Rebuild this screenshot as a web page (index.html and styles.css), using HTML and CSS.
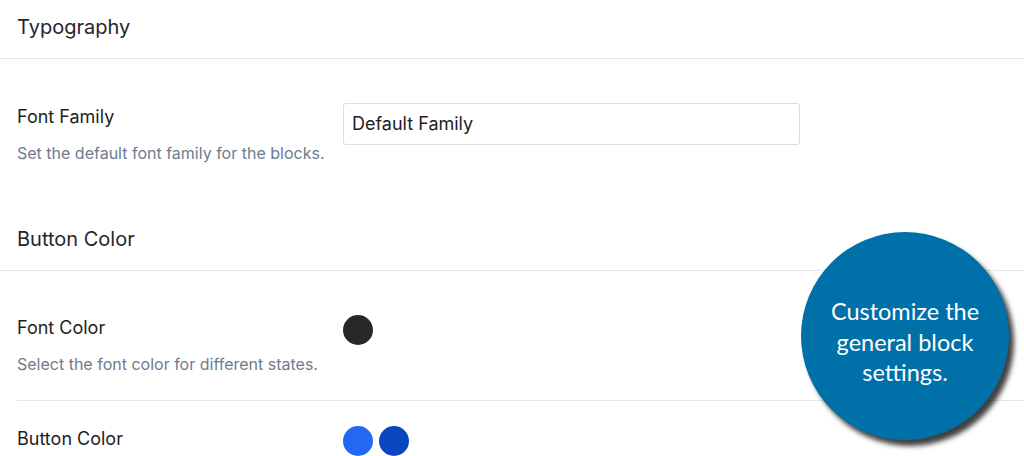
FILE: index.html
```html
<!DOCTYPE html>
<html>
<head>
<meta charset="utf-8">
<link rel="stylesheet" href="styles.css">
</head>
<body>
<div class="page">
  <div class="section-head">Typography</div>
  <div class="row row-first">
    <div class="info">
      <div class="label">Font Family</div>
      <div class="desc">Set the default font family for the blocks.</div>
    </div>
    <div class="control">
      <div class="input">Default Family</div>
    </div>
  </div>
  <div class="section-head">Button Color</div>
  <div class="row row-second">
    <div class="info">
      <div class="label">Font Color</div>
      <div class="desc">Select the font color for different states.</div>
    </div>
    <div class="control swatches">
      <span class="swatch dark"></span>
    </div>
  </div>
  <div class="row row-third">
    <div class="info">
      <div class="label">Button Color</div>
    </div>
    <div class="control swatches">
      <span class="swatch blue"></span>
      <span class="swatch navy"></span>
    </div>
  </div>
  <div class="callout"><span>Customize the general block settings.</span></div>
</div>
</body>
</html>
```
FILE: styles.css
```css
html, body {
  margin: 0;
  padding: 0;
  background: #ffffff;
}
body {
  font-family: Inter, "Liberation Sans", sans-serif;
  color: #1e1e1e;
  width: 1024px;
  height: 456px;
  overflow: hidden;
}
.page {
  position: relative;
  height: 456px;
}
.section-head {
  padding: 13px 17px 17px;
  font-size: 20px;
  line-height: 28px;
  color: #23272c;
  border-bottom: 1px solid #e4e9f3;
}
.row {
  display: flex;
  align-items: flex-start;
  margin-left: 17px;
}
.row-first {
  padding: 46px 0 49px;
}
.row-second {
  padding: 45px 0 26px;
  border-bottom: 1px solid #e6e7ee;
}
.row-third {
  padding: 26px 0 6px;
}
.info {
  width: 326px;
  flex: none;
}
.label {
  font-size: 18px;
  line-height: 24px;
  color: #1e1e1e;
}
.desc {
  margin-top: 14px;
  font-size: 16px;
  line-height: 20px;
  color: #6e7b8f;
}
.control {
  margin-top: -2px;
}
.input {
  box-sizing: border-box;
  width: 457px;
  height: 42px;
  border: 1px solid #dcdcde;
  border-radius: 3px;
  padding: 0 8px;
  font-size: 18px;
  line-height: 40px;
  color: #1e1e1e;
}
.swatches {
  display: flex;
  gap: 6px;
  margin-top: -1px;
}
.swatch {
  width: 30px;
  height: 30px;
  border-radius: 50%;
  display: block;
}
.swatch.dark { background: #282828; }
.swatch.blue { background: #2468f2; }
.swatch.navy { background: #0a46c0; }
.callout {
  box-sizing: border-box;
  position: absolute;
  left: 801px;
  top: 232px;
  width: 208px;
  height: 208px;
  padding-top: 12px;
  border-radius: 50%;
  background: #0070a9;
  box-shadow: 5px 6px 5px rgba(0, 0, 0, 0.75);
  display: flex;
  align-items: center;
  justify-content: center;
  text-align: center;
  color: #ffffff;
  font-family: Lato, "Open Sans", sans-serif;
  font-size: 23.5px;
  line-height: 30.5px;
}
.callout span {
  width: 170px;
}
```
